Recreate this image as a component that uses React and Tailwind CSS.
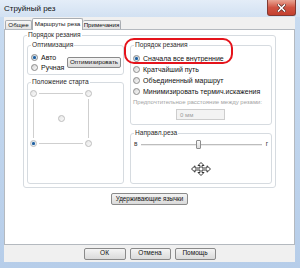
import React from "react";

function Radio({ checked = false, light = false }) {
  return (
    <span
      className={`inline-flex w-[7px] h-[7px] shrink-0 items-center justify-center rounded-full border ${
        light
          ? "border-[#bdbdbd] bg-gradient-to-br from-[#e6e6e6] to-[#fafafa]"
          : "border-[#8c8c8c] bg-gradient-to-br from-[#d4d4d4] to-[#fbfbfb]"
      }`}
    >
      {checked && <span className="w-[3px] h-[3px] rounded-full bg-[#1f5c9c] shadow-[0_0_1px_#4aa3e8]" />}
    </span>
  );
}

function Group({ label, className = "", children }) {
  return (
    <fieldset className={`min-w-0 border border-[#d6dbe0] rounded-[3px] ${className}`}>
      <legend className="ml-[3px] px-[1px] text-[6.6px] leading-[8px] text-[#2a2a2a] whitespace-nowrap">{label}</legend>
      {children}
    </fieldset>
  );
}

function Btn({ className = "", children }) {
  return (
    <div
      className={`flex items-center justify-center whitespace-nowrap rounded-[2px] border border-[#8a8a8a] bg-gradient-to-b from-[#f4f4f4] to-[#dadada] leading-none text-[#111] ${className}`}
    >
      {children}
    </div>
  );
}

function RadioRow({ checked, children }) {
  return (
    <div className="h-[11px] flex items-center gap-[3px] whitespace-nowrap text-[7px] text-[#111]">
      <Radio checked={checked} />
      <span>{children}</span>
    </div>
  );
}

export default function App() {
  return (
    <div className="relative w-[300px] h-[268px] flex flex-col overflow-hidden bg-gradient-to-b from-[#c9dcf1] to-[#b6cde9] font-['Liberation_Sans',Arial,sans-serif] text-[6px] leading-none text-black">
      {/* title bar */}
      <div className="h-[17px] flex items-start justify-between bg-gradient-to-b from-[#e4edf8] to-[#d2e1f2]">
        <div className="pl-[4px] pt-[4px] text-[8px] leading-[10px] text-[#121212]">Струйный рез</div>
        <div className="mr-[4px] w-[29px] h-[16px] rounded-b-[3px] border border-t-0 border-[#803a32] bg-gradient-to-b from-[#e8a595] via-[#d05443] to-[#c4402f] flex items-center justify-center">
          <svg width="9" height="8" viewBox="0 0 9 8">
            <path d="M1.5 1 L7.5 7 M7.5 1 L1.5 7" stroke="#5a2a24" strokeWidth="3" strokeLinecap="square" />
            <path d="M1.5 1 L7.5 7 M7.5 1 L1.5 7" stroke="#ffffff" strokeWidth="1.6" strokeLinecap="square" />
          </svg>
        </div>
      </div>

      {/* client area */}
      <div className="flex-1 flex flex-col ml-[4px] mr-[5px] bg-[#f0f0f0]">
        {/* tabs */}
        <div className="h-[12px] flex items-end pl-[1px] whitespace-nowrap text-[6.2px]">
          <div className="w-[27px] h-[9px] flex items-center justify-center border border-b-0 border-[#a9adb2] rounded-t-[2px] bg-gradient-to-b from-[#f7f7f7] to-[#e3e3e3] text-[#111]">
            Общее
          </div>
          <div className="relative z-10 -mb-px w-[51px] h-[12px] flex items-center justify-center border border-b-0 border-[#a9adb2] rounded-t-[2px] bg-white text-[#111]">
            Маршруты реза
          </div>
          <div className="w-[38px] h-[9px] flex items-center justify-center border border-b-0 border-l-0 border-[#a9adb2] rounded-t-[2px] bg-gradient-to-b from-[#f7f7f7] to-[#e3e3e3] text-[#111]">
            Примечания
          </div>
        </div>

        {/* panel */}
        <div className="flex-1 flex flex-col items-stretch border border-[#b4b9bf] bg-white pt-[1px]">
          <Group label="Порядок резания" className="mx-[18px]">
            <div className="flex gap-[6px] px-[3px] pt-[2px] pb-[3px]">
              {/* left column */}
              <div className="w-[97px] h-[143px] flex flex-col">
                <Group label="Оптимизация">
                  <div className="flex items-center pl-[3px] pr-[2px] pt-[3px] pb-[2px] text-[7px] text-[#111]">
                    <div className="flex flex-col">
                      <div className="h-[10px] flex items-center gap-[3px]">
                        <Radio checked />
                        <span>Авто</span>
                      </div>
                      <div className="h-[10px] flex items-center gap-[3px]">
                        <Radio />
                        <span>Ручная</span>
                      </div>
                    </div>
                    <Btn className="ml-auto w-[54px] h-[11px] text-[6.2px]">Оптимизировать</Btn>
                  </div>
                </Group>
                <Group label="Положение старта" className="mt-[3px] flex-1">
                  <div className="pl-[2px] pt-[4px]">
                    <div className="w-[62px] flex flex-col">
                      <div className="flex items-center">
                        <Radio light />
                        <div className="flex-1 h-px mx-[2px] bg-[#cfcfcf]" />
                        <Radio light />
                      </div>
                      <div className="h-[43px] flex justify-between">
                        <div className="w-[7px] flex justify-center py-[2px]">
                          <div className="w-px bg-[#cfcfcf]" />
                        </div>
                        <div className="self-center">
                          <Radio light />
                        </div>
                        <div className="w-[7px] flex justify-center py-[2px]">
                          <div className="w-px bg-[#cfcfcf]" />
                        </div>
                      </div>
                      <div className="flex items-center">
                        <Radio checked light />
                        <div className="flex-1 h-px mx-[2px] bg-[#cfcfcf]" />
                        <Radio light />
                      </div>
                    </div>
                  </div>
                </Group>
              </div>

              {/* right column */}
              <div className="flex-1 min-w-0 h-[143px] flex flex-col">
                <Group label="Порядок резания">
                  <div className="pl-[2px] pt-[4px] pb-[4px]">
                    <RadioRow checked>Сначала все внутренние</RadioRow>
                    <RadioRow>Кратчайший путь</RadioRow>
                    <RadioRow>Объединенный маршрут</RadioRow>
                    <RadioRow>Минимизировать термич.искажения</RadioRow>
                    <div className="h-[10px] flex items-center whitespace-nowrap text-[#a3a3a3]">Предпочтительное расстояние между резами:</div>
                    <div className="mt-[2px] ml-[43px] w-[49px] h-[11px] flex items-center pl-[3px] border border-[#cdcdcd] bg-[#f3f3f3] text-[#9c9c9c]">
                      0 мм
                    </div>
                  </div>
                </Group>
                <Group label="Направл.реза" className="mt-[4px] flex-1">
                  <div className="pt-[3px] flex flex-col items-center">
                    <div className="w-full h-[9px] flex items-center pl-[3px] pr-[3px] text-[6.5px]">
                      <span className="text-[#333]">в</span>
                      <div className="relative flex-1 h-[2px] mx-[4px] border-t border-[#bdbdbd] bg-[#ececec]">
                        <div className="absolute left-[55px] top-[-5px] w-[5px] h-[9px] rounded-[1px] border border-[#8d8d8d] bg-gradient-to-b from-[#fbfbfb] to-[#dcdcdc]" />
                      </div>
                      <span className="text-[#333]">г</span>
                    </div>
                    <svg className="mt-[13px]" width="20" height="14" viewBox="0 0 20 14">
                      <polygon
                        points="10,0.5 13,3.5 11,3.5 11,6 16,6 16,3.8 19.5,7 16,10.2 16,8 11,8 11,10.5 13,10.5 10,13.5 7,10.5 9,10.5 9,8 4,8 4,10.2 0.5,7 4,3.8 4,6 9,6 9,3.5 7,3.5"
                        fill="#ffffff"
                        stroke="#222222"
                        strokeWidth="0.9"
                        strokeLinejoin="miter"
                      />
                    </svg>
                  </div>
                </Group>
              </div>
            </div>
          </Group>

          <Btn className="self-center mt-[5px] w-[77px] h-[12px] text-[6.3px]">Удерживающие язычки</Btn>
        </div>

        {/* bottom buttons */}
        <div className="h-[17px] flex items-center justify-center gap-[4px] text-[6.5px]">
          <Btn className="w-[42px] h-[12px]">ОК</Btn>
          <Btn className="w-[41px] h-[12px]">Отмена</Btn>
          <Btn className="w-[41px] h-[12px]">Помощь</Btn>
        </div>
      </div>
      <div className="h-[6px]" />

      {/* red highlight annotation */}
      <div className="absolute left-[124px] top-[38px] w-[109px] h-[26px] rounded-[10px] border-[2px] border-[#e5131b]" />
    </div>
  );
}
